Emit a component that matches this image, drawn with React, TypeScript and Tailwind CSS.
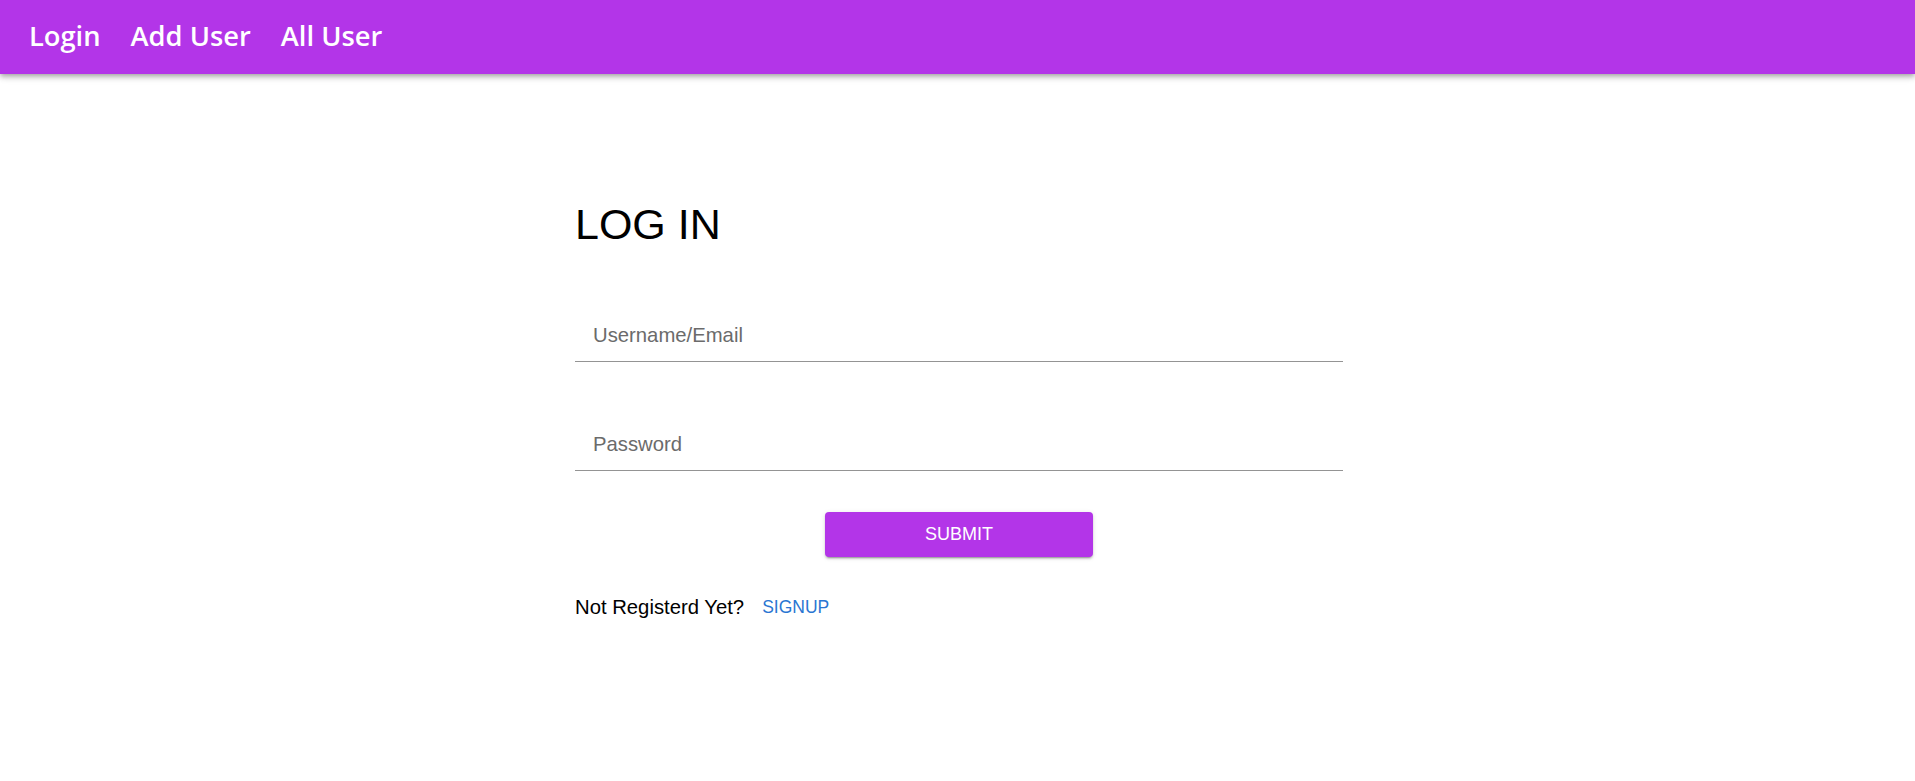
const navClass = "text-[27.3px] font-semibold text-white leading-none";
const inputClass =
  "box-border h-[53px] w-full border-0 border-b border-solid border-[#949494] bg-transparent px-[18px] text-[20.3px] text-black outline-none placeholder:text-[#6b6b6b]";

function NavBar() {
  return (
    <header className="relative z-10 flex h-[74px] items-center gap-[30px] bg-[#b335e8] px-[29px] pb-[2px] font-['Open_Sans',sans-serif] shadow-[0px_2px_4px_-1px_rgba(0,0,0,0.2),0px_4px_5px_0px_rgba(0,0,0,0.14),0px_1px_10px_0px_rgba(0,0,0,0.12)]">
      <a className={navClass}>Login</a>
      <a className={navClass}>Add User</a>
      <a className={navClass}>All User</a>
    </header>
  );
}

function LoginForm() {
  return (
    <main className="mx-auto flex w-[771px] flex-col pl-[3px] pt-[128px] font-['Liberation_Sans',Arial,sans-serif]">
      <h1 className="h-[44px] text-[43px] font-normal leading-[44px] text-black">LOG IN</h1>

      <input className={`${inputClass} mt-[63px]`} placeholder="Username/Email" />
      <input className={`${inputClass} mt-[56px]`} type="password" placeholder="Password" />

      <button
        type="button"
        className="mx-auto mt-[41px] h-[45px] w-[268px] rounded-[4px] bg-[#b335e8] text-[18px] uppercase text-white shadow-[0px_3px_1px_-2px_rgba(0,0,0,0.2),0px_2px_2px_0px_rgba(0,0,0,0.14),0px_1px_5px_0px_rgba(0,0,0,0.12)]"
      >
        Submit
      </button>

      <div className="mt-[38px] flex items-center gap-[18px] leading-[24px]">
        <span className="text-[20.3px] text-black">Not Registerd Yet?</span>
        <a className="text-[17.5px] uppercase text-[#2a76d2]">Signup</a>
      </div>
    </main>
  );
}

export default function App() {
  return (
    <div className="min-h-screen bg-white">
      <NavBar />
      <LoginForm />
    </div>
  );
}
